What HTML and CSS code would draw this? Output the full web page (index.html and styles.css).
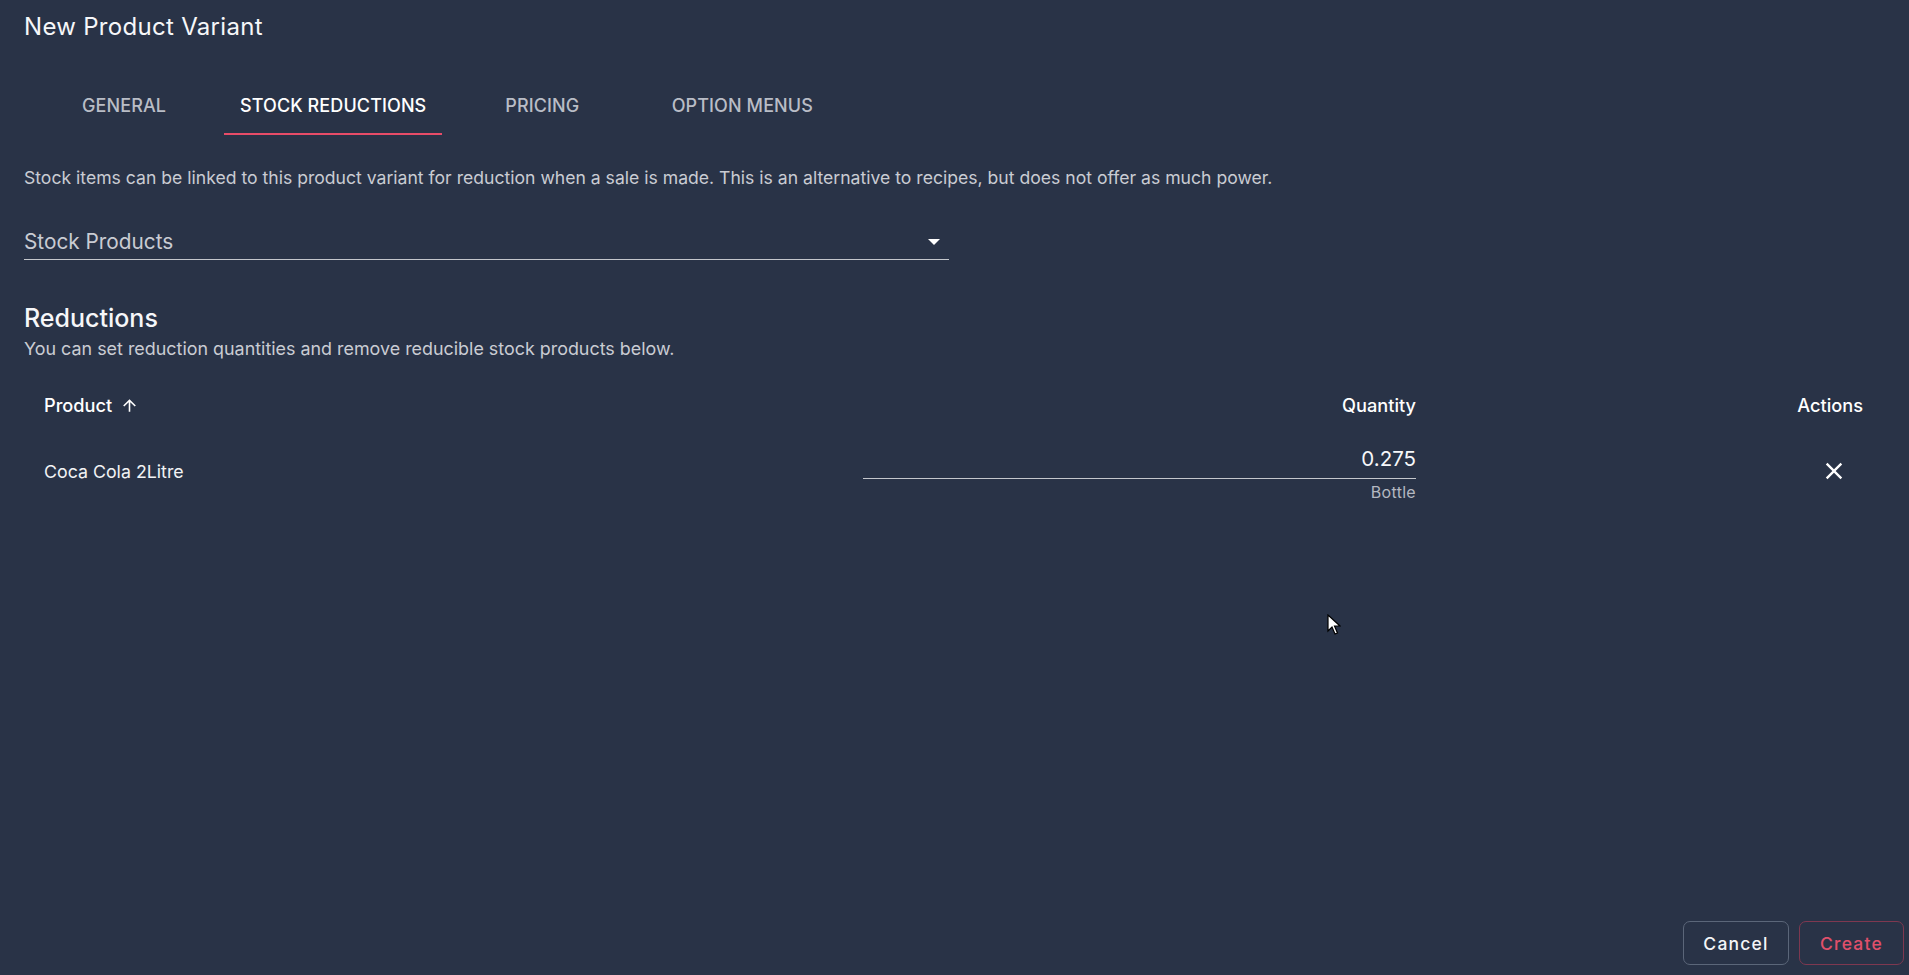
FILE: index.html
```html
<!DOCTYPE html>
<html lang="en">
<head>
<meta charset="utf-8">
<title>New Product Variant</title>
<link rel="stylesheet" href="styles.css">
</head>
<body>
<div class="dialog">
  <div class="content">
    <h1 class="title">New Product Variant</h1>
    <nav class="tabs">
      <div class="tab">GENERAL</div>
      <div class="tab active">STOCK REDUCTIONS</div>
      <div class="tab">PRICING</div>
      <div class="tab">OPTION MENUS</div>
    </nav>
    <p class="desc">Stock items can be linked to this product variant for reduction when a sale is made. This is an alternative to recipes, but does not offer as much power.</p>
    <div class="select">
      <span class="select-label">Stock Products</span>
      <span class="select-arrow"></span>
    </div>
    <h2 class="section-title">Reductions</h2>
    <p class="section-sub">You can set reduction quantities and remove reducible stock products below.</p>
    <div class="table">
      <div class="cell head col-product">Product
        <svg class="sort-icon" viewBox="0 0 24 24"><path d="M4 12l1.41 1.41L11 7.83V20h2V7.83l5.58 5.59L20 12l-8-8-8 8z" fill="currentColor"/></svg>
      </div>
      <div class="cell head col-qty">Quantity</div>
      <div class="cell head col-actions">Actions</div>

      <div class="cell body col-product">Coca Cola 2Litre</div>
      <div class="cell body col-qty">
        <div class="field">
          <div class="field-value">0.275</div>
          <div class="field-hint">Bottle</div>
        </div>
      </div>
      <div class="cell body col-actions">
        <button class="icon-btn" aria-label="Remove">
          <svg viewBox="0 0 24 24"><path d="M19 6.41L17.59 5 12 10.59 6.41 5 5 6.41 10.59 12 5 17.59 6.41 19 12 13.41 17.59 19 19 17.59 13.41 12z" fill="currentColor"/></svg>
        </button>
      </div>
    </div>
  </div>
  <div class="footer">
    <button class="btn btn-cancel">Cancel</button>
    <button class="btn btn-create">Create</button>
  </div>
</div>
<svg class="cursor" width="14" height="22" viewBox="0 0 14 22"><path d="M1 1 L1 17 L5 13 L8 20 L10.5 19 L7.5 12 L13 12 Z" fill="#ffffff" stroke="#000000" stroke-width="1.2" stroke-linejoin="miter"/></svg>
</body>
</html>
```

FILE: styles.css
```css
* { box-sizing: border-box; }
html, body { margin: 0; padding: 0; }
body {
  background: #293347;
  color: #f2f3f5;
  font-family: Inter, "Noto Sans", "Liberation Sans", sans-serif;
  width: 1909px;
  height: 975px;
  overflow: hidden;
  position: relative;
}
.dialog {
  height: 975px;
  display: flex;
  flex-direction: column;
}
.content {
  padding: 11px 24px 0 24px;
}
.title {
  margin: 0;
  font-size: 24px;
  line-height: 32px;
  font-weight: 400;
  color: #f6f7f9;
  letter-spacing: 0.3px;
}
.tabs {
  display: flex;
  margin-top: 32px;
  height: 60px;
}
.tab {
  min-width: 200px;
  padding: 0 16px;
  display: flex;
  align-items: center;
  justify-content: center;
  font-size: 18px;
  font-weight: 500;
  letter-spacing: 0.1px;
  color: #b9bdc6;
  position: relative;
}
.tab.active { color: #ffffff; }
.tab.active::after {
  content: "";
  position: absolute;
  left: 0; right: 0; bottom: 0;
  height: 2px;
  background: #e84c68;
}
.desc {
  margin: 31px 0 0 0;
  font-size: 17.6px;
  line-height: 24px;
  color: #c9ccd3;
}
.select {
  margin-top: 32px;
  width: 925px;
  padding: 6px 9px 3px 0;
  border-bottom: 1px solid #c4c7cc;
  display: flex;
  align-items: center;
  justify-content: space-between;
}
.select-label {
  font-size: 20.8px;
  line-height: 28px;
  color: #c9ccd3;
}
.select-arrow {
  width: 0; height: 0;
  border-left: 6px solid transparent;
  border-right: 6px solid transparent;
  border-top: 6px solid #ffffff;
  margin-top: -1px;
}
.section-title {
  margin: 42px 0 0 0;
  font-size: 25px;
  line-height: 32px;
  font-weight: 500;
  color: #f6f7f9;
}
.section-sub {
  margin: 3px 0 0 0;
  font-size: 17.9px;
  line-height: 24px;
  color: #c9ccd3;
}
.table {
  margin-top: 12px;
  display: grid;
  grid-template-columns: 819px 593px 1fr;
}
.cell {
  padding: 0 20px;
  display: flex;
  align-items: center;
  font-size: 17.8px;
}
.cell.head {
  height: 64px;
  font-size: 18.2px;
  font-weight: 500;
  color: #ffffff;
}
.cell.body {
  height: 68px;
  color: #f2f3f5;
}
.col-qty { justify-content: flex-end; }
.col-actions { justify-content: flex-end; padding-right: 22px; }
.sort-icon {
  width: 19px;
  height: 19px;
  margin-left: 8px;
  color: #ffffff;
}
.field {
  width: 100%;
  display: flex;
  flex-direction: column;
  align-items: flex-end;
  margin-top: 5px;
}
.field-value {
  width: 100%;
  text-align: right;
  font-size: 20.5px;
  line-height: 28px;
  padding-bottom: 5px;
  border-bottom: 1px solid #c4c7cc;
  color: #f6f7f9;
}
.field-hint {
  font-size: 16px;
  line-height: 20px;
  margin-top: 3px;
  letter-spacing: 0.3px;
  color: #b4b8c1;
}
.icon-btn {
  width: 48px;
  height: 48px;
  margin-right: 5px;
  padding: 0;
  border: none;
  background: transparent;
  color: #ffffff;
  display: flex;
  align-items: center;
  justify-content: center;
}
.icon-btn svg { width: 28px; height: 28px; }
.footer {
  margin-top: auto;
  display: flex;
  justify-content: flex-end;
  gap: 10px;
  padding: 0 5px 10px 0;
}
.btn {
  height: 44px;
  width: 106px;
  border-radius: 7px;
  background: transparent;
  font-family: Inter, "Noto Sans", sans-serif;
  font-size: 17.5px;
  font-weight: 500;
  letter-spacing: 1.2px;
}
.btn-cancel {
  border: 1px solid #5b6679;
  color: #f4f5f7;
}
.btn-create {
  border: 1px solid #7e3850;
  color: #e0506b;
  width: 105px;
}
.cursor {
  position: absolute;
  left: 1327px;
  top: 614px;
}
```
